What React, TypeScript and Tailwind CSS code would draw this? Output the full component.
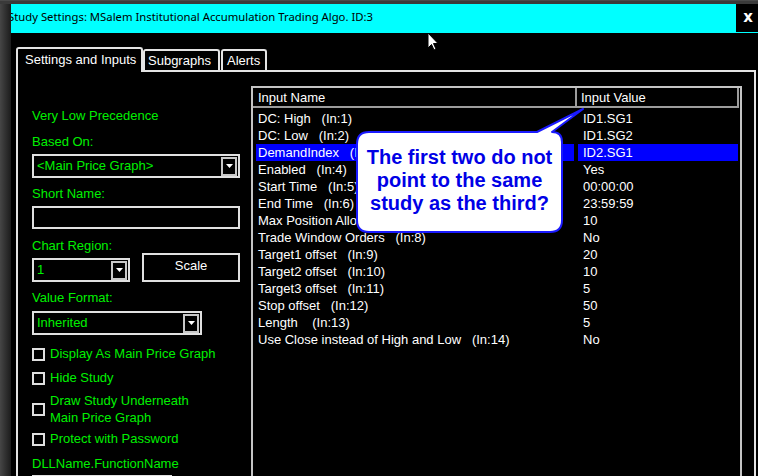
import React from "react";

type Input = { name: string; idx: number; value: string; gap?: string };

const inputs: Input[] = [
  { name: "DC: High", idx: 1, value: "ID1.SG1" },
  { name: "DC: Low", idx: 2, value: "ID1.SG2" },
  { name: "DemandIndex", idx: 3, value: "ID2.SG1" },
  { name: "Enabled", idx: 4, value: "Yes" },
  { name: "Start Time", idx: 5, value: "00:00:00" },
  { name: "End Time", idx: 6, value: "23:59:59" },
  { name: "Max Position Allocation", idx: 7, value: "10" },
  { name: "Trade Window Orders", idx: 8, value: "No" },
  { name: "Target1 offset", idx: 9, value: "20" },
  { name: "Target2 offset", idx: 10, value: "10" },
  { name: "Target3 offset", idx: 11, value: "5" },
  { name: "Stop offset", idx: 12, value: "50" },
  { name: "Length", idx: 13, value: "5", gap: "    " },
  { name: "Use Close instead of High and Low", idx: 14, value: "No" },
];

const SELECTED = 3;

function Arrow() {
  return (
    <div className="w-[16px] h-[19px] border-2 border-[#c8c8c8] bg-black flex items-center justify-center">
      <svg width="7" height="4" viewBox="0 0 7 4">
        <path d="M0 0 H7 L3.5 4 Z" fill="#fff" />
      </svg>
    </div>
  );
}

function Dropdown({ text, width }: { text: string; width: string }) {
  return (
    <div className={`${width} h-[24px] border-2 border-[#e0e0e0] p-[1px] flex items-center`}>
      <span className="flex-1 pl-[2px] text-[#00f000] leading-[16px]">{text}</span>
      <Arrow />
    </div>
  );
}

function Check({ children }: { children: React.ReactNode }) {
  return (
    <div className="flex items-center gap-[5px]">
      <div className="w-[13px] h-[13px] border-2 border-[#e0e0e0] bg-black shrink-0" />
      <div className="text-[#00f000]">{children}</div>
    </div>
  );
}

function Tab({ label, active, width, pad }: { label: string; active?: boolean; width: string; pad: string }) {
  return (
    <div
      className={`${width} ${pad} border-2 border-b-0 border-[#e4e4e4] rounded-t-[3px] bg-black text-white ${
        active ? "h-[25px] pt-[3px] relative z-10 -mb-[2px]" : "h-[21px] pt-[2px]"
      }`}
    >
      {label}
    </div>
  );
}

export default function App() {
  return (
    <div className="relative w-[758px] h-[476px] overflow-hidden bg-black font-['Liberation_Sans',Arial,sans-serif] text-[13px] leading-[16px]">
      <div className="h-[4px] bg-[#3a3a3a] border-t border-[#4a4a4a]" />
      <div className="flex h-[472px]">
        {/* window frame edge */}
        <div className="w-[11px] shrink-0 bg-gradient-to-r from-[#464646] to-[#1c1c1c]" />

        <div className="flex-1 flex flex-col min-h-0">
          {/* title bar */}
          <div className="h-[29px] shrink-0 flex border-b border-[#00ffff]">
            <div className="flex-1 bg-[#00ffff] overflow-hidden flex items-center pb-[2px]">
              <span className="-ml-[3px] whitespace-nowrap text-black font-['Noto_Sans',sans-serif] text-[11.3px]">
                Study Settings: MSalem Institutional Accumulation Trading Algo. ID:3
              </span>
            </div>
            <div className="w-[22px] flex items-center justify-center pb-[2px] pl-[2px] text-white font-bold text-[15px] font-['DejaVu_Sans',sans-serif]">
              x
            </div>
          </div>

          {/* tabs */}
          <div className="mt-[14px] pl-[5px] h-[23px] shrink-0 flex items-end">
            <Tab label="Settings and Inputs" active width="w-[127px]" pad="pl-[7px]" />
            <Tab label="Subgraphs" width="w-[77px]" pad="pl-[3px]" />
            <div className="w-[1px]" />
            <Tab label="Alerts" width="w-[46px]" pad="pl-[4px]" />
          </div>

          {/* tab page, runs past the bottom of the window */}
          <div className="ml-[5px] w-[740px] h-[430px] shrink-0 border-2 border-[#e4e4e4] flex">
            <div className="w-[233px] shrink-0 pl-[14px] pt-[36px] flex flex-col text-[#00f000]">
              <div>Very Low Precedence</div>
              <div className="mt-[10px]">Based On:</div>
              <div className="mt-[4px]">
                <Dropdown text="<Main Price Graph>" width="w-[208px]" />
              </div>
              <div className="mt-[8px]">Short Name:</div>
              <div className="mt-[4px] w-[208px] h-[23px] shrink-0 border-2 border-[#e0e0e0]" />
              <div className="mt-[9px] flex items-end">
                <div className="flex flex-col">
                  <div>Chart Region:</div>
                  <div className="mt-[4px]">
                    <Dropdown text="1" width="w-[98px]" />
                  </div>
                </div>
                <div className="ml-[12px] w-[98px] h-[29px] border-2 border-[#e0e0e0] flex items-center justify-center text-white pb-[4px]">
                  Scale
                </div>
              </div>
              <div className="mt-[8px]">Value Format:</div>
              <div className="mt-[5px]">
                <Dropdown text="Inherited" width="w-[170px]" />
              </div>
              <div className="mt-[11px]">
                <Check>Display As Main Price Graph</Check>
              </div>
              <div className="mt-[8px]">
                <Check>Hide Study</Check>
              </div>
              <div className="mt-[6px] leading-[17px]">
                <Check>
                  Draw Study Underneath
                  <br />
                  Main Price Graph
                </Check>
              </div>
              <div className="mt-[5px]">
                <Check>Protect with Password</Check>
              </div>
              <div className="mt-[9px]">DLLName.FunctionName</div>
              <div className="mt-[3px] w-[140px] h-[23px] shrink-0 border-2 border-[#e0e0e0]" />
            </div>

            {/* inputs list */}
            <div className="mt-[14px] w-[491px] h-[420px] shrink-0 border-2 border-[#c4c4c4] text-white">
              <div className="h-[20px] flex">
                <div className="w-[324px] border-r-2 border-b-2 border-[#9c9c9c] pl-[5px] pt-[2px]">Input Name</div>
                <div className="w-[162px] border-r-2 border-b-2 border-[#9c9c9c] pl-[4px] pt-[2px]">Input Value</div>
              </div>
              <div className="pt-[2px]">
                {inputs.map((r) => {
                  const sel = r.idx === SELECTED;
                  return (
                    <div key={r.idx} className="h-[17px] leading-[17px] flex">
                      <div className="w-[324px] px-[3px]">
                        <div className={`pl-[2px] whitespace-pre ${sel ? "bg-[#0000ff]" : ""}`}>
                          {r.name}
                          {r.gap ?? "   "}(In:{r.idx})
                        </div>
                      </div>
                      <div className="w-[162px] px-[1px]">
                        <div className={`pl-[5px] ${sel ? "bg-[#0000ff]" : ""}`}>{r.value}</div>
                      </div>
                    </div>
                  );
                })}
              </div>
            </div>
          </div>
        </div>
      </div>

      {/* speech bubble */}
      <svg className="absolute left-0 top-0 pointer-events-none" width="758" height="476">
        <path
          d="M369 132 H537 L583 109 L552 132 Q562 132 562 142 V220 Q562 232 550 232 H369 Q357 232 357 220 V144 Q357 132 369 132 Z"
          fill="#fff"
          stroke="#1a1aff"
          strokeWidth="2"
          strokeLinejoin="round"
        />
      </svg>
      <div className="absolute left-[357px] top-[146px] w-[205px] text-center font-bold text-[20px] leading-[23px] text-[#0000e6]">
        The first two do not
        <br />
        point to the same
        <br />
        study as the third?
      </div>

      {/* mouse pointer */}
      <svg className="absolute left-[427px] top-[32px] pointer-events-none" width="13" height="20" viewBox="0 0 13 20">
        <path d="M1 1 V16 L4.5 12.5 L7 18 L9 17 L6.5 11.5 H11 Z" fill="#fff" stroke="#000" strokeWidth="1" />
      </svg>
    </div>
  );
}
